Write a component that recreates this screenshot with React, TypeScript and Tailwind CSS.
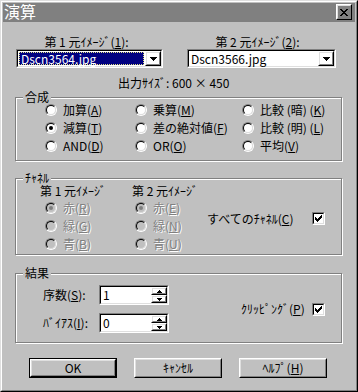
import React from 'react';

const FONT = "font-['Noto_Sans_CJK_JP',sans-serif]";
const GROUP = 'border border-[#808080] shadow-[inset_1px_1px_0_#fff,1px_1px_0_#fff] min-w-0';
const LEGEND = 'ml-[7px] px-[2px] leading-[12px] bg-[#c0c0c0]';
const DIM = 'text-[#808080] [text-shadow:1px_1px_0_#fff]';

type Box = { children?: React.ReactNode; className?: string };

function Raised({ children, className = '' }: Box) {
  return (
    <div className={`border border-t-white border-l-white border-r-black border-b-black ${className}`}>
      <div className="w-full h-full border border-t-[#dfdfdf] border-l-[#dfdfdf] border-r-[#808080] border-b-[#808080] flex items-center justify-center">
        {children}
      </div>
    </div>
  );
}

function Sunken({ children, className = '' }: Box) {
  return (
    <div className={`border border-t-[#808080] border-l-[#808080] border-r-white border-b-white ${className}`}>
      <div className="w-full h-full border border-t-black border-l-black border-r-[#dfdfdf] border-b-[#dfdfdf] bg-white">
        {children}
      </div>
    </div>
  );
}

function Radio({ checked = false, disabled = false }: { checked?: boolean; disabled?: boolean }) {
  return (
    <span className="flex shrink-0 w-[12px] h-[12px] rounded-full border border-t-[#808080] border-l-[#808080] border-r-white border-b-white">
      <span
        className={`flex w-full h-full items-center justify-center rounded-full border border-t-black border-l-black border-r-[#dfdfdf] border-b-[#dfdfdf] ${
          disabled ? 'bg-[#c0c0c0]' : 'bg-white'
        }`}
      >
        {checked && (
          <span className={`w-[4px] h-[4px] rounded-full ${disabled ? 'bg-[#808080]' : 'bg-black'}`} />
        )}
      </span>
    </span>
  );
}

function RadioItem({
  children,
  checked,
  disabled,
}: {
  children: React.ReactNode;
  checked?: boolean;
  disabled?: boolean;
}) {
  return (
    <div className="flex items-center gap-[6px] h-[18px]">
      <Radio checked={checked} disabled={disabled} />
      <span className={`leading-[14px] whitespace-nowrap ${disabled ? DIM : ''}`}>{children}</span>
    </div>
  );
}

function Checkbox({ className = '' }: { className?: string }) {
  return (
    <Sunken className={`w-[13px] h-[13px] shrink-0 ${className}`}>
      <div className="w-full h-full flex items-center justify-center">
        <svg width="7" height="7" viewBox="0 0 7 7" shapeRendering="crispEdges">
          <path
            d="M6 0h1v1h-1zM5 1h2v1h-2zM0 2h1v1h-1zM4 2h3v1h-3zM0 3h2v1h-2zM3 3h3v1h-3zM0 4h5v1h-5zM1 5h3v1h-3zM2 6h1v1h-1z"
            fill="#000"
          />
        </svg>
      </div>
    </Sunken>
  );
}

function DownArrow() {
  return (
    <svg width="7" height="4" viewBox="0 0 7 4" shapeRendering="crispEdges">
      <path d="M0 0h7v1h-7zM1 1h5v1h-5zM2 2h3v1h-3zM3 3h1v1h-1z" fill="#000" />
    </svg>
  );
}

function Spin({ value }: { value: string }) {
  return (
    <Sunken className="w-[70px] h-[20px]">
      <div className="flex h-full">
        <span className="flex-1 pl-[2px] leading-[16px]">{value}</span>
        <div className="w-[16px] flex flex-col">
          <Raised className="h-[8px]">
            <svg width="5" height="3" viewBox="0 0 5 3" shapeRendering="crispEdges">
              <path d="M2 0h1v1h-1zM1 1h3v1h-3zM0 2h5v1h-5z" fill="#000" />
            </svg>
          </Raised>
          <Raised className="h-[8px]">
            <svg width="5" height="3" viewBox="0 0 5 3" shapeRendering="crispEdges">
              <path d="M0 0h5v1h-5zM1 1h3v1h-3zM2 2h1v1h-1z" fill="#000" />
            </svg>
          </Raised>
        </div>
      </div>
    </Sunken>
  );
}

export default function App() {
  return (
    <div
      className={`w-[358px] h-[392px] bg-[#c0c0c0] text-black text-[12px] border border-t-[#dfdfdf] border-l-[#dfdfdf] border-r-black border-b-black ${FONT}`}
    >
      <div className="h-full border border-t-white border-l-white border-r-[#808080] border-b-[#808080]">
        {/* title bar */}
        <div className="mx-px mt-px h-[19px] bg-[#808080] flex items-start justify-between pl-px pr-[3px]">
          <span className="text-white text-[16px] leading-[16px]">演算</span>
          <Raised className="w-[16px] h-[16px] mt-px">
            <svg width="8" height="7" viewBox="0 0 8 7" shapeRendering="crispEdges">
              <path
                d="M0 0h2v1h-2zM6 0h2v1h-2zM1 1h2v1h-2zM5 1h2v1h-2zM2 2h4v1h-4zM3 3h2v1h-2zM2 4h4v1h-4zM1 5h2v1h-2zM5 5h2v1h-2zM0 6h2v1h-2zM6 6h2v1h-2z"
                fill="#000"
              />
            </svg>
          </Raised>
        </div>

        <div className="pl-[13px] pr-[14px]">
          {/* source images */}
          <div className="flex mt-[13px] ml-px gap-[24px]">
            <div className="w-[147px]">
              <div className="leading-[14px] text-center pr-[6px] whitespace-nowrap">
                第 1 元ｲﾒｰｼﾞ(<u>1</u>):
              </div>
              <Sunken className="h-[19px]">
                <div className="flex h-full">
                  <div className="flex-1 p-px">
                    <div className="h-full bg-[#000080] text-white border border-dotted border-[#e0e080] leading-[11px] pl-px">
                      Dscn3564.jpg
                    </div>
                  </div>
                  <Raised className="w-[16px] h-full">
                    <DownArrow />
                  </Raised>
                </div>
              </Sunken>
            </div>
            <div className="w-[149px]">
              <div className="leading-[14px] text-center pr-[8px] whitespace-nowrap">
                第 2 元ｲﾒｰｼﾞ(<u>2</u>):
              </div>
              <Sunken className="h-[19px]">
                <div className="flex h-full">
                  <div className="flex-1 pl-[2px] leading-[15px]">Dscn3566.jpg</div>
                  <Raised className="w-[16px] h-full">
                    <DownArrow />
                  </Raised>
                </div>
              </Sunken>
            </div>
          </div>

          <div className="mt-[8px] pl-[103px] leading-[14px]">出力ｻｲｽﾞ: 600 × 450</div>

          {/* 合成 */}
          <fieldset className={`mt-px ${GROUP}`}>
            <legend className={LEGEND}>合成</legend>
            <div className="-mt-[2px] pb-[5px] pl-[29px] grid grid-cols-[90px_107px_1fr]">
              <RadioItem>加算(<u>A</u>)</RadioItem>
              <RadioItem>乗算(<u>M</u>)</RadioItem>
              <RadioItem>比較 (暗) (<u>K</u>)</RadioItem>
              <RadioItem checked>減算(<u>T</u>)</RadioItem>
              <RadioItem>差の絶対値(<u>F</u>)</RadioItem>
              <RadioItem>比較 (明) (<u>L</u>)</RadioItem>
              <RadioItem>AND(<u>D</u>)</RadioItem>
              <RadioItem>OR(<u>O</u>)</RadioItem>
              <RadioItem>平均(<u>V</u>)</RadioItem>
            </div>
          </fieldset>

          {/* チャネル */}
          <fieldset className={`mt-[11px] ${GROUP}`}>
            <legend className={LEGEND}>ﾁｬﾈﾙ</legend>
            <div className="flex pl-[24px] pr-[16px] pb-px">
              <div className="w-[92px]">
                <div className="leading-[14px] whitespace-nowrap">第 1 元ｲﾒｰｼﾞ</div>
                <div className="pl-[5px] mt-px">
                  <RadioItem checked disabled>赤(<u>R</u>)</RadioItem>
                  <RadioItem disabled>緑(<u>G</u>)</RadioItem>
                  <RadioItem disabled>青(<u>B</u>)</RadioItem>
                </div>
              </div>
              <div className="w-[75px]">
                <div className="leading-[14px] whitespace-nowrap">第 2 元ｲﾒｰｼﾞ</div>
                <div className="pl-[3px] mt-px">
                  <RadioItem checked disabled>赤(<u>E</u>)</RadioItem>
                  <RadioItem disabled>緑(<u>N</u>)</RadioItem>
                  <RadioItem disabled>青(<u>U</u>)</RadioItem>
                </div>
              </div>
              <div className="flex-1 flex items-center">
                <span className="whitespace-nowrap">すべてのﾁｬﾈﾙ(<u>C</u>)</span>
                <Checkbox className="ml-auto" />
              </div>
            </div>
          </fieldset>

          {/* 結果 */}
          <fieldset className={`mt-[12px] ${GROUP}`}>
            <legend className={LEGEND}>結果</legend>
            <div className="flex items-center pl-[27px] pr-[16px] pt-[6px] pb-[9px]">
              <div className="flex flex-col gap-[8px]">
                <div className="flex items-center">
                  <span className="w-[56px] whitespace-nowrap">序数(<u>S</u>):</span>
                  <Spin value="1" />
                </div>
                <div className="flex items-center">
                  <span className="w-[56px] whitespace-nowrap">ﾊﾞｲｱｽ(<u>I</u>):</span>
                  <Spin value="0" />
                </div>
              </div>
              <span className="ml-[72px] whitespace-nowrap">ｸﾘｯﾋﾟﾝｸﾞ(<u>P</u>)</span>
              <Checkbox className="ml-auto" />
            </div>
          </fieldset>

          {/* buttons */}
          <div className="flex gap-[17px] ml-[14px] mt-[15px]">
            <div className="w-[88px] h-[20px] border border-black">
              <Raised className="w-full h-full">OK</Raised>
            </div>
            <Raised className="w-[88px] h-[20px]">ｷｬﾝｾﾙ</Raised>
            <Raised className="w-[88px] h-[20px]">
              ﾍﾙﾌﾟ(<u>H</u>)
            </Raised>
          </div>
        </div>
      </div>
    </div>
  );
}
